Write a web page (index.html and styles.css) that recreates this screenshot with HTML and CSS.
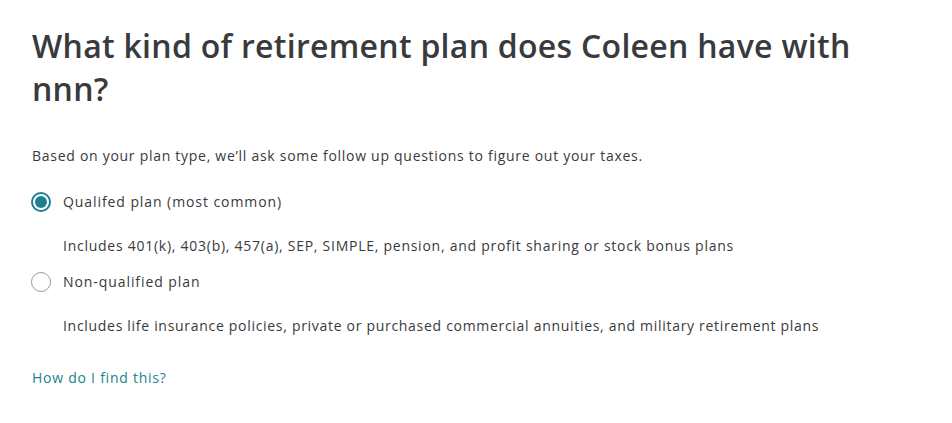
FILE: index.html
```html
<!DOCTYPE html>
<html lang="en">
<head>
<meta charset="utf-8">
<title>Retirement plan</title>
<link rel="stylesheet" href="styles.css">
</head>
<body>
<main class="page">
  <h1 class="title">What kind of retirement plan does Coleen have with nnn?</h1>
  <p class="intro">Based on your plan type, we’ll ask some follow up questions to figure out your taxes.</p>
  <div class="options">
    <div class="option">
      <label class="option-row">
        <span class="radio radio-checked"><span class="radio-dot"></span></span>
        <span class="option-label">Qualifed plan (most common)</span>
      </label>
      <p class="option-desc">Includes 401(k), 403(b), 457(a), SEP, SIMPLE, pension, and profit sharing or stock bonus plans</p>
    </div>
    <div class="option">
      <label class="option-row">
        <span class="radio"></span>
        <span class="option-label">Non-qualified plan</span>
      </label>
      <p class="option-desc">Includes life insurance policies, private or purchased commercial annuities, and military retirement plans</p>
    </div>
  </div>
  <a class="help-link" href="#">How do I find this?</a>
</main>
</body>
</html>
```

FILE: styles.css
```css
html, body {
  margin: 0;
  padding: 0;
  background: #ffffff;
}
body {
  font-family: "Open Sans", Lato, sans-serif;
  color: #393a3d;
}
.page {
  padding: 24px 0 0 32px;
  width: 860px;
}
.title {
  margin: 0;
  font-size: 32px;
  line-height: 43px;
  font-weight: 600;
  letter-spacing: 0.28px;
  color: #393a3d;
}
.intro {
  margin: 36px 0 0 0;
  font-size: 14px;
  line-height: 20px;
  letter-spacing: 0.72px;
}
.options {
  margin-top: 26px;
  display: flex;
  flex-direction: column;
}
.option-row {
  display: flex;
  align-items: center;
  gap: 12px;
  margin-left: -1px;
  height: 20px;
}
.radio {
  box-sizing: border-box;
  width: 20px;
  height: 20px;
  border-radius: 50%;
  border: 1px solid #9a9b9e;
  display: flex;
  align-items: center;
  justify-content: center;
  flex: none;
}
.radio-checked {
  border: 2px solid #1f7f90;
}
.radio-dot {
  width: 12px;
  height: 12px;
  border-radius: 50%;
  background: #1f7f90;
}
.option-label {
  font-size: 14px;
  line-height: 20px;
  letter-spacing: 0.92px;
}
.option-desc {
  margin: 24px 0 16px 31px;
  font-size: 14px;
  line-height: 20px;
  letter-spacing: 0.74px;
}
.option:last-child .option-desc {
  margin-bottom: 0;
  letter-spacing: 0.7px;
}
.help-link {
  display: inline-block;
  margin-top: 32px;
  font-size: 14px;
  line-height: 20px;
  letter-spacing: 0.75px;
  color: #1f7f90;
  text-decoration: none;
}
```
